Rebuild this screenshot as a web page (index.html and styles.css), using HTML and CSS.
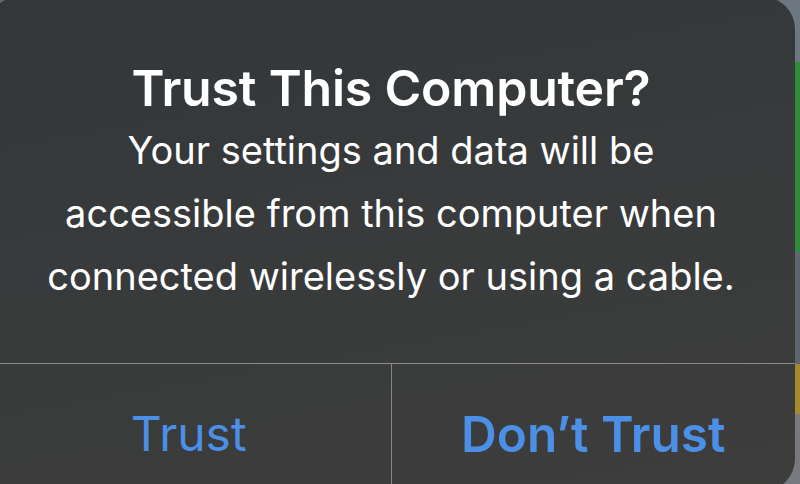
FILE: index.html
```html
<!DOCTYPE html>
<html>
<head>
<meta charset="utf-8">
<link rel="stylesheet" href="styles.css">
</head>
<body>
<div class="backdrop">
  <div class="strip">
    <div class="band b1"></div>
    <div class="band b2"></div>
    <div class="band b3"></div>
    <div class="band b4"></div>
    <div class="band b5"></div>
  </div>
  <div class="alert">
    <div class="content">
      <h1 class="title">Trust This Computer?</h1>
      <p class="message">Your settings and data will be<br>accessible from this computer when<br>connected wirelessly or using a cable.</p>
    </div>
    <div class="actions">
      <div class="action">Trust</div>
      <div class="action primary">Don’t Trust</div>
    </div>
  </div>
</div>
</body>
</html>
```
FILE: styles.css
```css
html, body {
  margin: 0;
  padding: 0;
  width: 800px;
  height: 484px;
  overflow: hidden;
  background: #5e6873;
}
.backdrop {
  position: relative;
  width: 800px;
  height: 484px;
  overflow: hidden;
}
.strip {
  position: absolute;
  right: 0;
  top: 0;
  width: 20px;
  height: 484px;
  display: flex;
  flex-direction: column;
}
.band { width: 100%; }
.b1 { height: 62px; background: #6c7782; }
.b2 { height: 190px; background: #2f8a3c; }
.b3 { height: 112px; background: #5d6670; }
.b4 { height: 50px; background: #a48a2c; }
.b5 { flex: 1; background: #767a7e; }
.alert {
  position: absolute;
  left: -13px;
  top: -3px;
  width: 808px;
  height: 494px;
  border-radius: 32px;
  background: linear-gradient(170deg, #33373a 0%, #383a3b 45%, #3d3d3c 100%);
  display: flex;
  flex-direction: column;
  font-family: Inter, "Noto Sans", sans-serif;
  color: #ffffff;
}
.content {
  height: 366px;
  box-sizing: border-box;
  padding-top: 62px;
  text-align: center;
}
.title {
  margin: 0;
  font-size: 50px;
  font-weight: 600;
  line-height: 58px;
  letter-spacing: -0.2px;
}
.message {
  margin: 2px 0 0 0;
  font-size: 38px;
  font-weight: 400;
  line-height: 63px;
}
.actions {
  flex: 1;
  display: flex;
  border-top: 1px solid #8a8a8a;
}
.action {
  flex: 1;
  display: flex;
  align-items: center;
  justify-content: center;
  padding-top: 12px;
  font-size: 48px;
  color: #4c8fe6;
}
.action + .action { border-left: 1px solid #858585; }
.primary { font-weight: 600; font-size: 49.5px; }
```
